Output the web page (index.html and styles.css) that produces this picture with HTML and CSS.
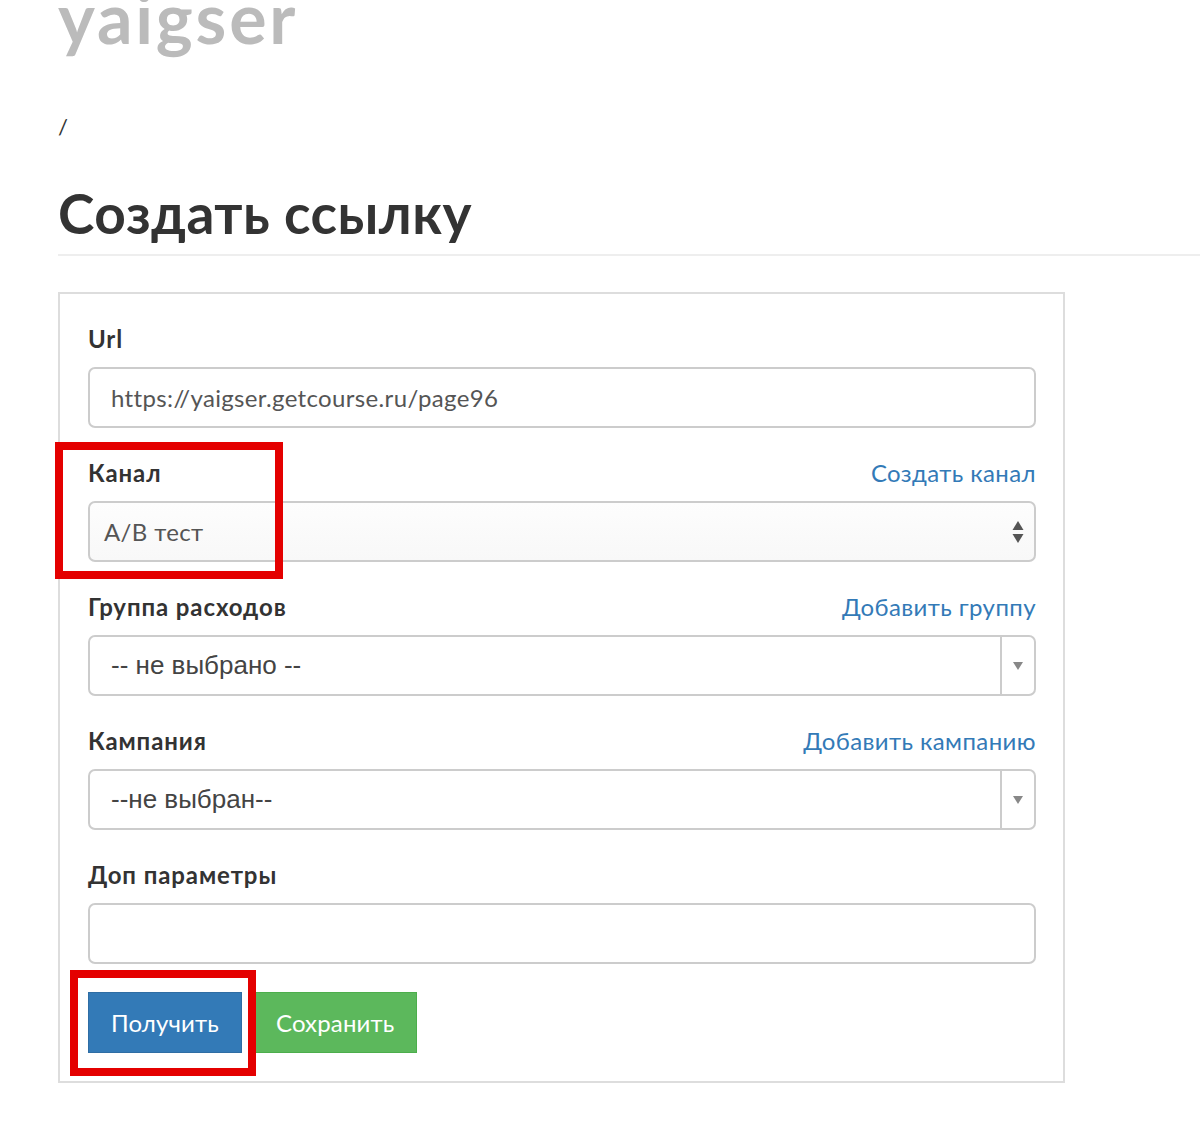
FILE: index.html
```html
<!DOCTYPE html>
<html lang="ru">
<head>
  <meta charset="UTF-8" />
  <title>Создать ссылку</title>
  <link rel="stylesheet" href="styles.css">
</head>
<body>

  <div class="page">
    <div class="logo">yaigser</div>
    <div class="crumbs">/</div>
    <h1>Создать ссылку</h1>

    <div class="panel">
      <div class="field">
        <div class="field-head">
          <label>Url</label>
        </div>
        <input type="text" class="control" value="https://yaigser.getcourse.ru/page96" />
      </div>

      <div class="field">
        <div class="field-head">
          <label>Канал</label>
          <a href="#">Создать канал</a>
        </div>
        <div class="control native-select">
          <span>A/B тест</span>
          <svg class="updown" width="12" height="24" viewBox="0 0 12 24">
            <path d="M6 1 L11.5 10 L0.5 10 Z" fill="#555"/>
            <path d="M6 23 L11.5 14 L0.5 14 Z" fill="#555"/>
          </svg>
        </div>
      </div>

      <div class="field">
        <div class="field-head">
          <label>Группа расходов</label>
          <a href="#">Добавить группу</a>
        </div>
        <div class="control chosen">
          <span class="chosen-text">-- не выбрано --</span>
          <span class="chosen-arrow"></span>
        </div>
      </div>

      <div class="field">
        <div class="field-head">
          <label>Кампания</label>
          <a href="#">Добавить кампанию</a>
        </div>
        <div class="control chosen">
          <span class="chosen-text">--не выбран--</span>
          <span class="chosen-arrow"></span>
        </div>
      </div>

      <div class="field">
        <div class="field-head">
          <label>Доп параметры</label>
        </div>
        <input type="text" class="control" value="" />
      </div>

      <div class="actions">
        <button class="btn btn-blue">Получить</button>
        <button class="btn btn-green">Сохранить</button>
      </div>

      <div class="mark mark-channel"></div>
      <div class="mark mark-get"></div>
    </div>
  </div>

</body>
</html>
```

FILE: styles.css
```css
body {
  margin: 0;
  background: #fff;
  font-family: Lato, 'Open Sans', sans-serif;
  color: #333;
  overflow: hidden;
}

.page {
  padding-left: 58px;
}

.logo {
  font-size: 70px;
  font-weight: 700;
  color: #bbb;
  line-height: 1;
  letter-spacing: 2.8px;
  margin-top: -18px;
}

.crumbs {
  margin-top: 62px;
  font-size: 22px;
  line-height: 1.2;
  color: #333;
}

h1 {
  margin: 40px 0 0;
  font-size: 55px;
  line-height: 1.2;
  font-weight: 700;
  letter-spacing: 0.5px;
  color: #333;
  padding-bottom: 8px;
  border-bottom: 2px solid #eee;
}

.panel {
  position: relative;
  box-sizing: border-box;
  width: 1007px;
  margin-top: 36px;
  border: 2px solid #ddd;
  padding: 29px 27px 28px 28px;
}

.field {
  margin-bottom: 29px;
}

.field-head {
  display: flex;
  justify-content: space-between;
  align-items: center;
  height: 30px;
  margin-bottom: 14px;
}

.field-head label {
  font-size: 24px;
  font-weight: 700;
  letter-spacing: 0.9px;
  color: #333;
}

.field-head a {
  font-size: 24px;
  letter-spacing: 0.4px;
  color: #337ab7;
  text-decoration: none;
}

.control {
  display: block;
  box-sizing: border-box;
  width: 100%;
  height: 61px;
  border: 2px solid #ccc;
  border-radius: 7px;
  background: #fff;
  font-family: inherit;
  font-size: 24px;
  letter-spacing: 0.35px;
  color: #555;
  padding: 0 21px;
  outline: none;
}

.native-select {
  display: flex;
  align-items: center;
  justify-content: space-between;
  padding: 0 8px 0 14px;
  background: linear-gradient(#fdfdfd, #f8f8f8);
}

.updown {
  margin-right: 2px;
}

.chosen {
  display: flex;
  align-items: center;
  padding: 0;
}

.chosen-text {
  flex: 1;
  padding-left: 21px;
  font-family: 'Liberation Sans', Arial, sans-serif;
  font-size: 26px;
  letter-spacing: 0;
  color: #444;
}

.chosen-arrow {
  width: 32px;
  height: 100%;
  border-left: 2px solid #ccc;
  display: flex;
  align-items: center;
  justify-content: center;
}

.chosen-arrow::after {
  content: "";
  border-left: 5px solid transparent;
  border-right: 5px solid transparent;
  border-top: 8px solid #888;
}

.actions {
  display: flex;
  gap: 11px;
  margin-top: -1px;
}

.btn {
  height: 61px;
  padding: 0 22px;
  border: 1px solid transparent;
  font-family: inherit;
  font-size: 24px;
  letter-spacing: 0.15px;
  color: #fff;
  cursor: pointer;
}

.btn-blue {
  background: #337ab7;
  border-color: #2e6da4;
}

.btn-green {
  background: #5cb85c;
  border-color: #4cae4c;
}

.mark {
  position: absolute;
  box-sizing: border-box;
  border: 8px solid #e40000;
}

.mark-channel {
  left: -5px;
  top: 148px;
  width: 228px;
  height: 137px;
}

.mark-get {
  left: 10px;
  top: 676px;
  width: 186px;
  height: 106px;
}
```
